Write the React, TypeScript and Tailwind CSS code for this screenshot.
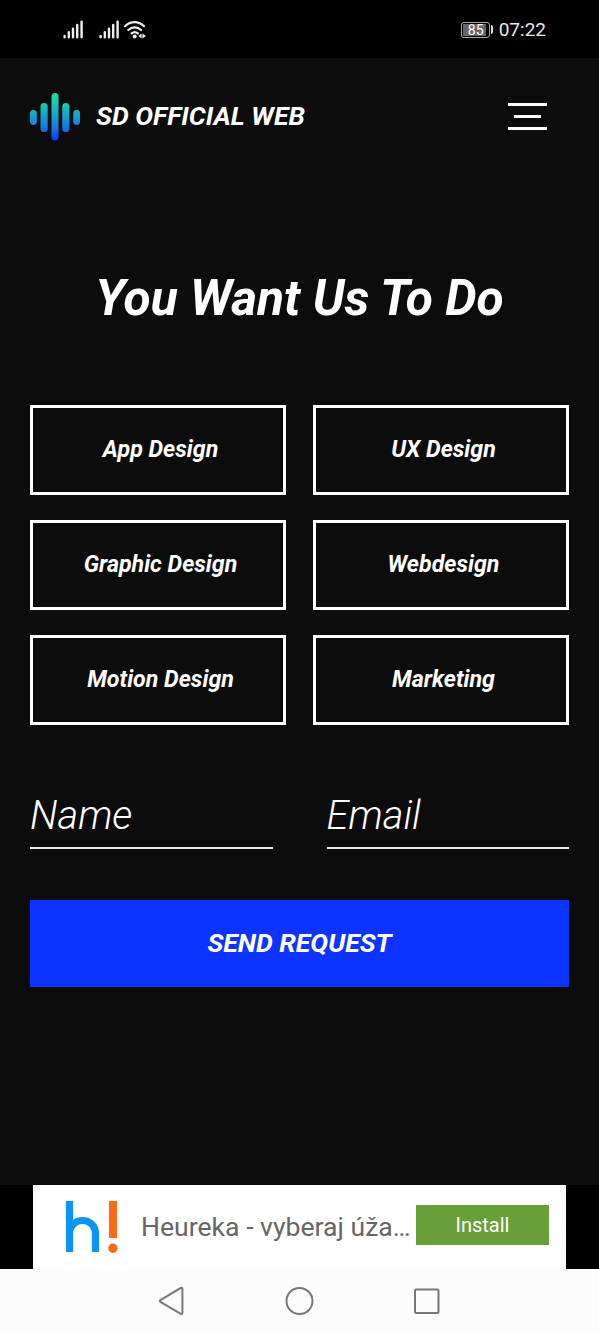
const services = ['App Design', 'UX Design', 'Graphic Design', 'Webdesign', 'Motion Design', 'Marketing'];

const fields = ['Name', 'Email'];

const SignalIcon = () => (
  <svg width="21" height="20" viewBox="0 0 21 20" stroke="#eee" strokeWidth="2.4" strokeLinecap="round">
    <path d="M1.6 17.3v-1.4M5.8 17.3v-5M10 17.3V8.6M14.2 17.3V5M18.6 17.3V1.6" />
  </svg>
);

const WifiIcon = () => (
  <svg width="24" height="20" viewBox="0 0 24 20" fill="none" stroke="#eee" strokeWidth="2.2" strokeLinecap="round">
    <path d="M2 6.2c5.6-5.4 13.4-5.4 19 0M5.3 10c3.8-3.5 9-3.5 12.8 0M8.6 13.4c2-1.7 4.4-1.7 6.3 0" />
    <circle cx="11.7" cy="16.6" r="2" fill="#eee" stroke="none" />
    <path d="M18.600 13.600v5l-3.200-2.500zM19.400 13.600v5l3.600-2.500z" fill="#eee" stroke="none" />
  </svg>
);

const StatusBar = () => (
  <div className="flex h-[58px] items-center bg-black pt-px text-[#e8e8e8]">
    <div className="ml-[63px] flex w-[57px] justify-between">
      <SignalIcon />
      <SignalIcon />
    </div>
    <div className="ml-[3px]">
      <WifiIcon />
    </div>
    <div className="ml-auto flex items-center">
      <div className="flex h-4 w-[29px] rounded-[3px] border border-[#aaa] p-px">
        <div className="flex w-[23px] items-center justify-center bg-[#666] pl-[3px] text-[14px] leading-none text-white">
          85
        </div>
      </div>
      <div className="ml-[1px] h-[9px] w-[2px] rounded-r bg-[#e0e0e0]" />
      <div className="mr-[53px] ml-[6px] pb-px text-[19px] leading-none">07:22</div>
    </div>
  </div>
);

const Logo = () => (
  <svg width="50" height="48" viewBox="0 0 50 48">
    <defs>
      <linearGradient id="wave" x1="0" y1="0" x2="0" y2="48" gradientUnits="userSpaceOnUse">
        <stop offset="0" stopColor="#12e0a0" />
        <stop offset="0.25" stopColor="#15c8b0" />
        <stop offset="0.5" stopColor="#149fcc" />
        <stop offset="0.75" stopColor="#1671e6" />
        <stop offset="1" stopColor="#0c35f5" />
      </linearGradient>
    </defs>
    <g fill="url(#wave)">
      <rect x="0" y="17" width="6.8" height="15" rx="3.4" />
      <rect x="10.5" y="10" width="7.2" height="29" rx="3.6" />
      <rect x="21.5" y="0" width="7" height="47.5" rx="3.5" />
      <rect x="32.2" y="10" width="7.2" height="29" rx="3.6" />
      <rect x="43.2" y="17" width="6.8" height="15" rx="3.4" />
    </g>
  </svg>
);

const Header = () => (
  <header className="flex h-[117px] items-center pr-[52px] pl-[30px]">
    <Logo />
    <span className="ml-[16px] pb-[2px] text-[26.6px] font-bold whitespace-nowrap italic">SD OFFICIAL WEB</span>
    <button className="ml-auto flex w-[39px] flex-col items-center gap-[9px]" aria-label="Menu">
      <span className="h-[3px] w-full bg-white" />
      <span className="h-[3px] w-[27px] bg-white" />
      <span className="h-[3px] w-full bg-white" />
    </button>
  </header>
);

const AdBanner = () => (
  <div className="flex h-[84px] justify-center bg-black">
    <div className="flex w-[533px] bg-white">
      <svg className="mt-[15px] ml-[32px]" width="54" height="54" viewBox="0 0 54 54">
        <path d="M4.5 1v51M4.5 52V34c0-18 26-18 26 0v18" fill="none" stroke="#0a94f7" strokeWidth="7.2" />
        <path d="M44 1h8v37h-8z" fill="#fb6a16" />
        <circle cx="47.9" cy="48.2" r="4.7" fill="#fb6a16" />
      </svg>
      <span className="mt-[23px] ml-[22px] w-[275px] text-[26.6px] leading-[38px] whitespace-nowrap text-[#666]">
        Heureka - vyberaj úža…
      </span>
      <button className="mt-5 h-10 w-[133px] shrink-0 bg-[#689f38] text-[20px] text-white">Install</button>
    </div>
  </div>
);

const NavBar = () => (
  <nav className="flex h-[64px] items-center bg-[#fcfcfc]">
    <svg className="ml-[157px]" width="284" height="32" viewBox="0 0 284 32" fill="none" stroke="#777" strokeWidth="2">
      <path d="M3.400 15.100 23.400 3.200q2-1 2 1v23.500q0 2-2 1L3.400 16.800q-1.300-.900 0-1.700z" />
      <circle cx="142.5" cy="16" r="13" />
      <rect x="258" y="4.5" width="23.5" height="23.5" rx="1" />
    </svg>
  </nav>
);

export default function App() {
  return (
    <div className="flex h-[1333px] w-[599px] flex-col overflow-hidden bg-[#0c0c0c] font-['Roboto',sans-serif] text-white">
      <StatusBar />
      <Header />

      <main className="flex flex-1 flex-col px-[30px]">
        <h1 className="mt-[93px] text-center text-[49.7px] leading-[60px] font-bold whitespace-nowrap italic">
          You Want Us To Do
        </h1>

        {/* Services */}
        <div className="mt-[77px] grid grid-cols-2 gap-x-[27px] gap-y-[25px]">
          {services.map((service) => (
            <button
              key={service}
              className="h-[90px] border-3 border-white pl-[5px] text-[23.2px] leading-none font-bold italic"
            >
              {service}
            </button>
          ))}
        </div>

        {/* Contact */}
        <div className="mt-[60px] grid grid-cols-2 gap-x-[54px]">
          {fields.map((field) => (
            <div key={field} className="h-[64px] border-b-2 border-[#e8e8e8] text-[39.8px] leading-[62px] font-light italic">
              {field}
            </div>
          ))}
        </div>

        <button className="mt-[51px] h-[87px] bg-[#0f33ff] pb-[2px] text-[26.6px] font-bold italic">SEND REQUEST</button>
      </main>

      <AdBanner />
      <NavBar />
    </div>
  );
}
